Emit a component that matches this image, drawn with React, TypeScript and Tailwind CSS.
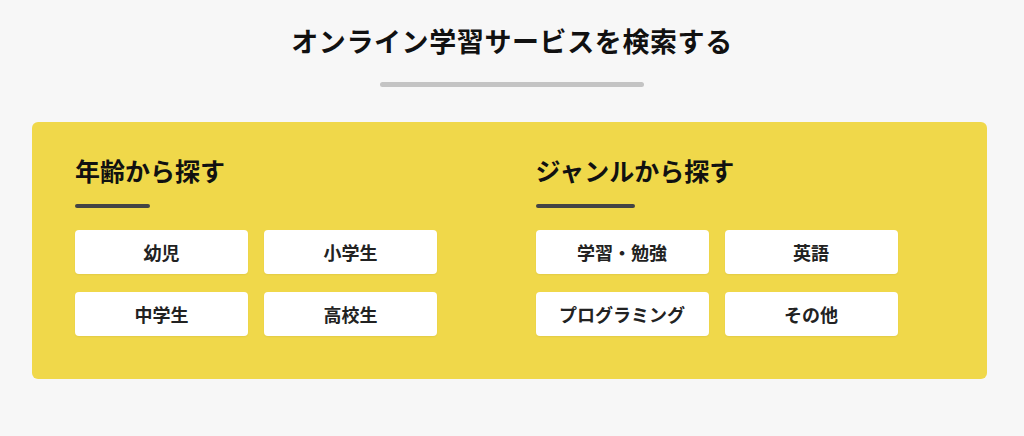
const ages = ['幼児', '小学生', '中学生', '高校生'];
const genres = ['学習・勉強', '英語', 'プログラミング', 'その他'];

function Group({ title, items }: { title: string; items: string[] }) {
  return (
    <div>
      <div className="w-fit">
        <h3 className="text-[25px] leading-[36px] font-bold text-[#111]">{title}</h3>
        <div className="mt-[16px] h-[4px] w-1/2 rounded-full bg-[#444]" />
      </div>
      <div className="mt-[22px] grid grid-cols-[173px_173px] gap-x-[16px] gap-y-[18px]">
        {items.map((item) => (
          <a
            key={item}
            href="#"
            className="flex h-[44px] items-center justify-center rounded-[4px] bg-white text-[18px] font-bold text-[#222] shadow-[0_1px_2px_rgba(0,0,0,0.06)]"
          >
            {item}
          </a>
        ))}
      </div>
    </div>
  );
}

export default function App() {
  return (
    <div
      className="min-h-[436px] bg-[#f7f7f7] pt-[21px]"
      style={{ fontFamily: '"Noto Sans CJK JP", "Noto Sans", sans-serif' }}
    >
      <h2 className="text-center text-[27px] leading-[40px] font-bold tracking-[0.6px] text-[#111]">
        オンライン学習サービスを検索する
      </h2>
      <div className="mx-auto mt-[21px] h-[5px] w-[264px] rounded-full bg-[#c4c4c4]" />
      <section className="ml-[32px] mt-[35px] grid w-[955px] grid-cols-2 gap-[52px] rounded-[6px] bg-[#f0d84a] px-[43px] pt-[30px] pb-[43px]">
        <Group title="年齢から探す" items={ages} />
        <Group title="ジャンルから探す" items={genres} />
      </section>
    </div>
  );
}
